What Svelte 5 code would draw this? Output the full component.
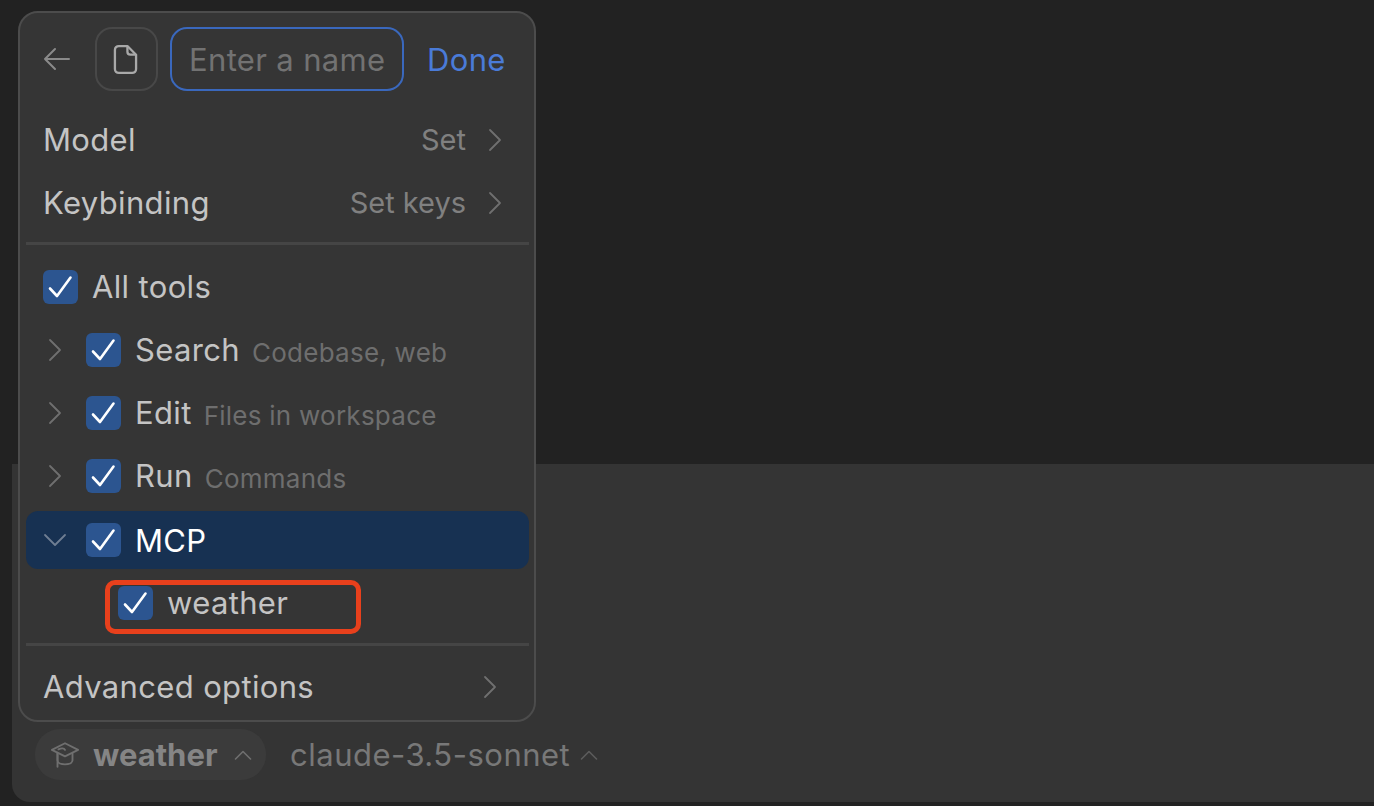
<script>
  const tools = [
    { name: 'Search', hint: 'Codebase, web' },
    { name: 'Edit', hint: 'Files in workspace' },
    { name: 'Run', hint: 'Commands' }
  ];
</script>

{#snippet check()}
  <span class="check">
    <svg viewBox="0 0 34 34" width="35" height="34" fill="none"><path d="M6.5 18.5 L13.5 26 L27 7.5" stroke="#fff" stroke-width="2.6" stroke-linecap="round" stroke-linejoin="round"/></svg>
  </span>
{/snippet}

{#snippet chevRight()}
  <svg class="chev" viewBox="0 0 16 24" width="16" height="24" fill="none"><path d="M3 2 L13 12 L3 22" stroke="currentColor" stroke-width="1.8" stroke-linecap="round" stroke-linejoin="round"/></svg>
{/snippet}

<div class="page">
  <div class="top"></div>
  <div class="composer">
    <div class="bar">
      <div class="pill">
        <svg viewBox="0 0 32 28" width="30" height="27" fill="none" stroke="#6f6f6f" stroke-width="2" stroke-linecap="round" stroke-linejoin="round">
          <path d="M16 2 L30 9 L16 16 L2 9 Z"/>
          <path d="M8 13 V20 C8 23 12 24.5 16 24.5 C20 24.5 24 23 24 20 V13"/>
          <path d="M9 8.5 C12 7 15 7 16 9"/>
          <path d="M8 12 V27"/>
        </svg>
        <strong>weather</strong>
        <svg class="up" viewBox="0 0 18 10" width="18" height="10" fill="none"><path d="M1.5 9 L9 1.5 L16.5 9" stroke="currentColor" stroke-width="1.6" stroke-linecap="round" stroke-linejoin="round"/></svg>
      </div>
      <div class="model">
        <span>claude-3.5-sonnet</span>
        <svg class="up dim" viewBox="0 0 18 10" width="18" height="10" fill="none"><path d="M1.5 9 L9 1.5 L16.5 9" stroke="currentColor" stroke-width="1.6" stroke-linecap="round" stroke-linejoin="round"/></svg>
      </div>
    </div>
  </div>

  <div class="popup">
    <header>
      <svg class="back" viewBox="0 0 28 24" width="28" height="24" fill="none"><path d="M26 12 H2 M12 2 L2 12 L12 22" stroke="#8a8a8a" stroke-width="2" stroke-linecap="round" stroke-linejoin="round"/></svg>
      <div class="docbtn">
        <svg viewBox="0 0 26 32" width="25" height="31" fill="none" stroke="#a9a9a9" stroke-width="2.4" stroke-linejoin="round"><path d="M6 2 H15 L24 11 V26 A4 4 0 0 1 20 30 H6 A4 4 0 0 1 2 26 V6 A4 4 0 0 1 6 2 Z"/><path d="M15 2 V8 A3 3 0 0 0 18 11 H24"/></svg>
      </div>
      <div class="nameinput"><span>Enter a name</span></div>
      <span class="done">Done</span>
    </header>

    <div class="row"><span class="label">Model</span><span class="value">Set</span>{@render chevRight()}</div>
    <div class="row"><span class="label">Keybinding</span><span class="value">Set keys</span>{@render chevRight()}</div>
    <div class="divider first"></div>

    <div class="row all">{@render check()}<span class="label">All tools</span></div>
    {#each tools as t}
      <div class="row tool">
        {@render chevRight()}
        {@render check()}
        <span class="label">{t.name}</span>
        <span class="hint">{t.hint}</span>
      </div>
    {/each}
    <div class="row tool active">
      <svg class="chevdown" viewBox="0 0 24 14" width="24" height="14" fill="none"><path d="M2 2 L12 12 L22 2" stroke="currentColor" stroke-width="1.8" stroke-linecap="round" stroke-linejoin="round"/></svg>
      {@render check()}
      <span class="label">MCP</span>
    </div>
    <div class="row sub">{@render check()}<span class="label">weather</span></div>
    <div class="divider"></div>
    <div class="row adv"><span class="label">Advanced options</span>{@render chevRight()}</div>

    <div class="annotation"></div>
  </div>
</div>

<style>
  :global(body) { margin: 0; background: #222; }
  .page {
    position: relative;
    width: 1374px;
    height: 806px;
    overflow: hidden;
    display: flex;
    flex-direction: column;
    background: #222;
    font-family: Inter, "Liberation Sans", sans-serif;
  }
  .top { height: 464px; flex: none; background: #222; }
  .composer {
    height: 338px;
    flex: none;
    margin-left: 12px;
    background: #343434;
    border-bottom-left-radius: 18px;
    display: flex;
    align-items: flex-end;
  }
  .bar { display: flex; align-items: center; padding: 0 0 22px 23px; }
  .pill {
    display: flex;
    align-items: center;
    width: 231px;
    height: 51px;
    box-sizing: border-box;
    padding-left: 15px;
    background: #3b3b3b;
    border-radius: 25px;
    color: #858585;
    font-size: 31px;
  }
  .pill strong { margin-left: 13px; font-weight: 700; }
  .pill .up { margin-left: 16px; color: #6f6f6f; }
  .model { display: flex; align-items: center; margin-left: 24px; color: #787878; font-size: 31px; letter-spacing: 0.5px; }
  .model .up { margin-left: 10px; }
  .up.dim { color: #5c5c5c; }

  .popup {
    position: absolute;
    left: 18px;
    top: 11px;
    width: 518px;
    height: 711px;
    box-sizing: border-box;
    border: 2px solid #4c4c4c;
    border-radius: 20px;
    background: #353535;
    padding: 14px 5px 0 6px;
    color: #c9c9c9;
    font-size: 31px;
    letter-spacing: 0.35px;
  }
  header { display: flex; align-items: center; height: 64px; margin-bottom: 17px; padding-left: 17px; }
  .back { flex: none; }
  .docbtn {
    flex: none;
    width: 63px;
    height: 64px;
    box-sizing: border-box;
    margin-left: 24px;
    border: 2px solid #484848;
    border-radius: 17px;
    display: flex;
    align-items: center;
    justify-content: center;
    padding-right: 3px;
  }
  .nameinput {
    flex: none;
    width: 234px;
    height: 64px;
    box-sizing: border-box;
    margin-left: 12px;
    padding: 0 17px;
    border: 2px solid #3a68bd;
    border-radius: 17px;
    display: flex;
    align-items: center;
    overflow: hidden;
    white-space: nowrap;
    color: #727272;
  }
  .nameinput span { padding-top: 1px; }
  .done { margin-left: 23px; padding-top: 1px; color: #4a7bd8; }
  .row { display: flex; align-items: center; height: 63px; padding: 0 26px 0 17px; white-space: nowrap; box-sizing: border-box; }
  .label { color: #c4c4c4; }
  .value { margin-left: auto; color: #808080; font-size: 29px; letter-spacing: 0; }
  .chev { flex: none; color: #6f6f6f; margin-left: 21px; }
  .divider { height: 3px; background: #454545; }
  .divider.first { margin-top: 8px; margin-bottom: 10px; }
  .check {
    flex: none;
    width: 35px;
    height: 34px;
    border-radius: 6px;
    background: #2c5590;
    display: block;
  }
  .check svg { display: block; }
  .all .label { margin-left: 14px; }
  .tool { padding-left: 21px; }
  .tool .chev { margin-left: 0; }
  .tool .check { margin-left: 23px; }
  .tool .label { margin-left: 14px; }
  .hint { margin-left: 12px; color: #6e6e6e; font-size: 26px; letter-spacing: 0.25px; padding-top: 6px; }
  .active {
    height: 58px;
    margin: 4px 0 2px;
    padding-left: 17px;
    background: #173152;
    border-radius: 12px;
  }
  .active .label { color: #fff; }
  .chevdown { flex: none; color: #6f7e92; }
  .active .check { margin-left: 19px; }
  .sub { padding-left: 92px; margin-bottom: 9px; }
  .sub .label { margin-left: 14px; }
  .adv { margin-top: 9px; padding-right: 31px; }
  .adv .chev { margin-left: auto; }
  .annotation {
    position: absolute;
    left: 85px;
    top: 567px;
    width: 256px;
    height: 54px;
    box-sizing: border-box;
    border: 5px solid #e8401c;
    border-radius: 10px;
  }
</style>
